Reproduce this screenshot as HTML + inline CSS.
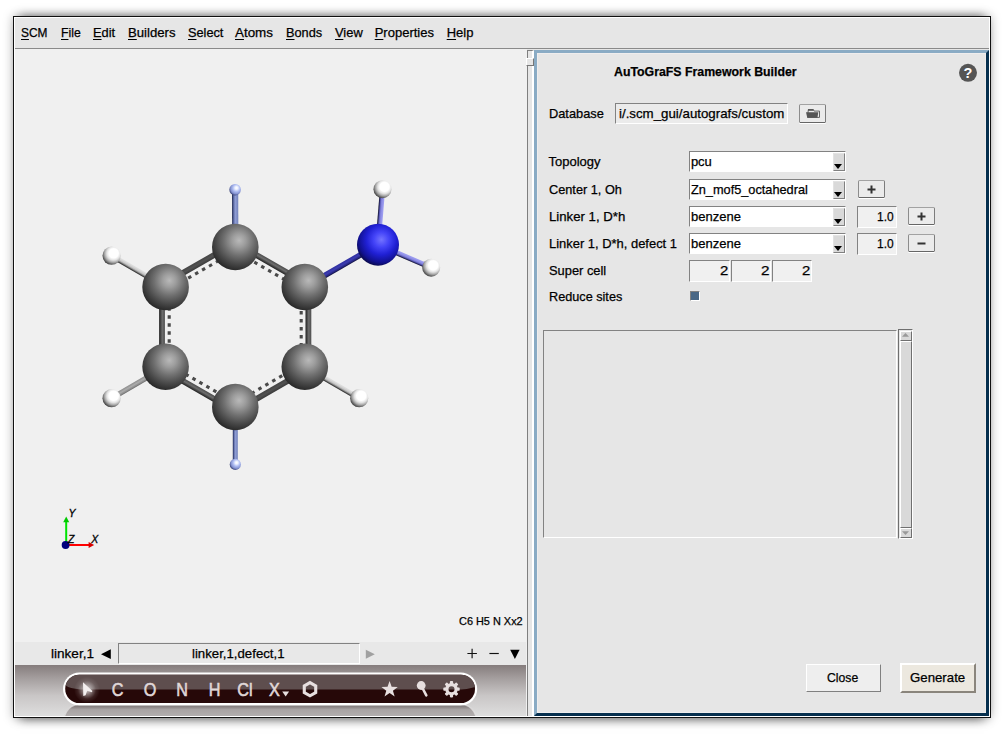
<!DOCTYPE html>
<html>
<head>
<meta charset="utf-8">
<title>AuToGraFS Framework Builder</title>
<style>
html,body{margin:0;padding:0;}
body{width:1004px;height:734px;background:#fff;overflow:hidden;position:relative;
 font-family:"Liberation Sans",sans-serif;font-size:13px;color:#000;}
.abs{position:absolute;}
#win{position:absolute;left:13px;top:16px;width:976px;height:700px;border:1px solid #111;background:#e6e6e6;
 box-shadow:0 0 10px rgba(0,0,0,.27), 0 -7px 9px -7px rgba(0,0,0,.52), 0 8px 10px -7px rgba(0,0,0,.54);}
#win:after{content:"";position:absolute;left:0;top:0;right:0;bottom:0;border:1px solid #fff;pointer-events:none;}
#inner{position:absolute;left:-14px;top:-17px;width:1004px;height:734px;}
.t{position:absolute;white-space:nowrap;line-height:16px;height:16px;transform-origin:0 50%;color:#000;-webkit-text-stroke:0.25px #000;}
.m u{text-decoration:underline;text-decoration-thickness:1px;text-underline-offset:2px;}
#menuline{left:15px;top:48px;width:974px;height:1px;background:#8a8a8a;}
#view{left:15px;top:49px;width:512px;height:667px;background:#f0f0f0;}
#tabbar{left:15px;top:642px;width:511px;height:23px;background:#e8e8e8;}
#toolbar{left:15px;top:665px;width:511px;height:51px;background:linear-gradient(#857c7c 0,#a39d9d 25%,#c9c6c6 60%,#dedede 100%);overflow:hidden;}
#sash{left:527px;top:50px;width:7px;height:666px;background:#e6e6e6;box-sizing:border-box;border-left:1px solid #7f7f7f;border-top:1px solid #7f7f7f;border-right:2px solid #fff;}
#handle{left:526px;top:58px;width:8px;height:8px;box-sizing:border-box;background:#e6e6e6;border-top:1px solid #fff;border-left:1px solid #fff;border-right:1px solid #777;border-bottom:1px solid #777;}
#panel{left:534px;top:50px;width:455px;height:666px;box-sizing:border-box;background:#e6e6e6;border:3px solid;border-color:#8aabc4 #06304f #06304f #8aabc4;box-shadow:inset 0 0 0 1px #efeded;}
.sunken{position:absolute;box-sizing:border-box;border:1px solid;border-color:#828282 #fff #fff #828282;}
.raised{position:absolute;box-sizing:border-box;border:1px solid;border-color:#fff #808080 #808080 #fff;background:#eee;}
.combo{background:#fff;height:20.6px;left:689px;width:157px;}
.cbtn{position:absolute;box-sizing:border-box;right:0;top:1px;bottom:0;width:12px;background:#d9d9d9;border:1px solid;border-color:#e2e2e2 #808080 #808080 #e2e2e2;}
.cbtn:after{content:"";position:absolute;left:.3px;bottom:.9px;border:4.2px solid transparent;border-top:5.2px solid #000;border-bottom:0;}
.entry{background:#f0f0f0;}
.btn{position:absolute;box-sizing:border-box;background:#ebebeb;border:1px solid;border-color:#a2a2a2 #7c7c7c #666 #8c8c8c;box-shadow:0 1px 0 #fff;border-radius:1.5px;}
.btn svg{position:absolute;left:0;top:0;}
</style>
</head>
<body>
<div id="win"><div id="inner">

<div id="menuline" class="abs"></div>
<div id="view" class="abs"></div>
<svg class="abs" style="left:15px;top:49px" width="511" height="593" viewBox="15 49 511 593">
<defs>
<radialGradient id="gC" cx="0.58" cy="0.36" r="0.72" fx="0.58" fy="0.36"><stop offset="0" stop-color="#b9b9b9"/><stop offset="0.2" stop-color="#9d9d9d"/><stop offset="0.45" stop-color="#707070"/><stop offset="0.7" stop-color="#484848"/><stop offset="0.9" stop-color="#2a2a2a"/><stop offset="1" stop-color="#1c1c1c"/></radialGradient>
<radialGradient id="gN" cx="0.58" cy="0.38" r="0.72" fx="0.58" fy="0.38"><stop offset="0" stop-color="#7474ff"/><stop offset="0.25" stop-color="#4444f8"/><stop offset="0.5" stop-color="#2020d4"/><stop offset="0.75" stop-color="#111190"/><stop offset="0.92" stop-color="#08083c"/><stop offset="1" stop-color="#04041c"/></radialGradient>
<radialGradient id="gH" cx="0.6" cy="0.38" r="0.68" fx="0.62" fy="0.36"><stop offset="0" stop-color="#fff"/><stop offset="0.38" stop-color="#fff"/><stop offset="0.55" stop-color="#e2e2e2"/><stop offset="0.72" stop-color="#aaa"/><stop offset="0.86" stop-color="#6a6a6a"/><stop offset="0.96" stop-color="#3a3a3a"/><stop offset="1" stop-color="#2a2a2a"/></radialGradient>
<radialGradient id="gX" cx="0.6" cy="0.38" r="0.68" fx="0.62" fy="0.34"><stop offset="0" stop-color="#fff"/><stop offset="0.18" stop-color="#eef2ff"/><stop offset="0.45" stop-color="#aebcf2"/><stop offset="0.72" stop-color="#8492d0"/><stop offset="0.9" stop-color="#48528a"/><stop offset="1" stop-color="#2c3458"/></radialGradient>
<linearGradient id="bCC" x1="0" y1="0" x2="0" y2="1"><stop offset="0" stop-color="#242424"/><stop offset="0.2" stop-color="#3c3c3c"/><stop offset="0.55" stop-color="#6e6e6e"/><stop offset="1" stop-color="#4c4c4c"/></linearGradient>
<linearGradient id="bCH" x1="0" y1="0" x2="0" y2="1"><stop offset="0" stop-color="#2a2a2a"/><stop offset="0.12" stop-color="#444"/><stop offset="0.3" stop-color="#8c8c8c"/><stop offset="0.5" stop-color="#c2c2c2"/><stop offset="0.8" stop-color="#dadada"/><stop offset="1" stop-color="#e0e0e0"/></linearGradient>
<linearGradient id="bNH" x1="0" y1="0" x2="0" y2="1"><stop offset="0" stop-color="#0c0c28"/><stop offset="0.12" stop-color="#26265c"/><stop offset="0.3" stop-color="#5a5ab4"/><stop offset="0.5" stop-color="#8484de"/><stop offset="0.8" stop-color="#9898ee"/><stop offset="1" stop-color="#a0a0f0"/></linearGradient>
<linearGradient id="bCN" x1="0" y1="0" x2="0" y2="1"><stop offset="0" stop-color="#0e0e38"/><stop offset="0.2" stop-color="#24247c"/><stop offset="0.55" stop-color="#3c3cb0"/><stop offset="1" stop-color="#3030a0"/></linearGradient>
<linearGradient id="bCX" x1="0" y1="0" x2="0" y2="1"><stop offset="0" stop-color="#1c2444"/><stop offset="0.12" stop-color="#38447a"/><stop offset="0.3" stop-color="#6a78b0"/><stop offset="0.55" stop-color="#8e9cd4"/><stop offset="1" stop-color="#7282ba"/></linearGradient>
<linearGradient id="bCCd" x1="0" y1="0" x2="0" y2="1"><stop offset="0" stop-color="#3a3a3a"/><stop offset="0.5" stop-color="#525252"/><stop offset="1" stop-color="#444"/></linearGradient>
<linearGradient id="bCHd" x1="0" y1="0" x2="0" y2="1"><stop offset="0" stop-color="#666"/><stop offset="0.2" stop-color="#8a8a8a"/><stop offset="0.55" stop-color="#acacac"/><stop offset="1" stop-color="#8c8c8c"/></linearGradient>
<linearGradient id="ovl" x1="0" y1="0" x2="1" y2="0"><stop offset="0.3" stop-color="#000" stop-opacity=".3"/><stop offset="0.55" stop-color="#000" stop-opacity="0.06"/><stop offset="0.6" stop-color="#fff" stop-opacity="0.05"/><stop offset="0.85" stop-color="#fff" stop-opacity=".28"/></linearGradient>
</defs>
<rect x="0" y="-2.90" width="80.19" height="5.80" fill="url(#bCC)" transform="translate(237.10 243.88) rotate(29.92) scale(1,-1)"/>
<line x1="233.50" y1="250.12" x2="303.00" y2="290.12" stroke="#4a4a4a" stroke-width="3.1" stroke-dasharray="3.5 4.5" stroke-dashoffset="0.0"/>
<rect x="0" y="-2.90" width="79.80" height="5.80" fill="url(#bCC)" transform="translate(308.40 287.00) rotate(90.00) scale(1,-1)"/>
<line x1="301.20" y1="287.00" x2="301.20" y2="366.80" stroke="#4a4a4a" stroke-width="3.1" stroke-dasharray="3.5 4.5" stroke-dashoffset="0.0"/>
<rect x="0" y="-2.90" width="80.29" height="5.80" fill="url(#bCCd)" transform="translate(306.60 369.92) rotate(149.95)"/>
<line x1="303.00" y1="363.68" x2="233.50" y2="403.88" stroke="#4a4a4a" stroke-width="3.1" stroke-dasharray="3.5 4.5" stroke-dashoffset="0.0"/>
<rect x="0" y="-2.90" width="80.46" height="5.80" fill="url(#bCC)" transform="translate(233.50 410.12) rotate(-150.03)"/>
<line x1="237.10" y1="403.88" x2="167.40" y2="363.68" stroke="#4a4a4a" stroke-width="3.1" stroke-dasharray="3.5 4.5" stroke-dashoffset="0.0"/>
<rect x="0" y="-2.90" width="79.80" height="5.80" fill="url(#bCC)" transform="translate(162.00 366.80) rotate(-90.00)"/>
<line x1="169.20" y1="366.80" x2="169.20" y2="287.00" stroke="#4a4a4a" stroke-width="3.1" stroke-dasharray="3.5 4.5" stroke-dashoffset="0.0"/>
<rect x="0" y="-2.90" width="80.36" height="5.80" fill="url(#bCCd)" transform="translate(163.81 283.88) rotate(-29.85) scale(1,-1)"/>
<line x1="167.39" y1="290.12" x2="237.09" y2="250.12" stroke="#4a4a4a" stroke-width="3.1" stroke-dasharray="3.5 4.5" stroke-dashoffset="0.0"/>
<rect x="0" y="-2.60" width="62.42" height="5.20" fill="url(#bCH)" transform="translate(165.60 287.00) rotate(-149.90)"/>
<rect x="0" y="-2.60" width="62.47" height="5.20" fill="url(#bCHd)" transform="translate(165.60 366.80) rotate(149.82)"/>
<rect x="0" y="-2.60" width="62.81" height="5.20" fill="url(#bCH)" transform="translate(304.80 366.80) rotate(29.99) scale(1,-1)"/>
<rect x="0" y="-3.10" width="57.30" height="6.20" fill="url(#bCX)" transform="translate(235.30 247.00) rotate(-90.20)"/>
<rect x="0" y="-2.50" width="57.40" height="5.00" fill="url(#bCX)" transform="translate(235.30 407.00) rotate(90.00) scale(1,-1)"/>
<rect x="0" y="-2.80" width="84.54" height="5.60" fill="url(#bCN)" transform="translate(304.80 287.00) rotate(-30.02) scale(1,-1)"/>
<rect x="0" y="-2.60" width="55.68" height="5.20" fill="url(#bNH)" transform="translate(378.00 244.70) rotate(-85.36)"/>
<rect x="0" y="-2.60" width="57.96" height="5.20" fill="url(#bNH)" transform="translate(378.00 244.70) rotate(23.38) scale(1,-1)"/>
<circle cx="235.3" cy="247.0" r="23.3" fill="url(#gC)"/>
<circle cx="304.8" cy="287.0" r="23.3" fill="url(#gC)"/>
<circle cx="304.8" cy="366.8" r="23.3" fill="url(#gC)"/>
<circle cx="235.3" cy="407.0" r="23.3" fill="url(#gC)"/>
<circle cx="165.6" cy="366.8" r="23.3" fill="url(#gC)"/>
<circle cx="165.6" cy="287.0" r="23.3" fill="url(#gC)"/>
<circle cx="378.0" cy="244.7" r="21.0" fill="url(#gN)"/>
<circle cx="111.6" cy="255.7" r="9.1" fill="url(#gH)"/>
<circle cx="111.6" cy="398.2" r="9.1" fill="url(#gH)"/>
<circle cx="359.2" cy="398.2" r="9.1" fill="url(#gH)"/>
<circle cx="382.5" cy="189.2" r="9.0" fill="url(#gH)"/>
<circle cx="431.2" cy="267.7" r="9.0" fill="url(#gH)"/>
<circle cx="235.1" cy="189.7" r="5.8" fill="url(#gX)"/>
<circle cx="235.3" cy="464.4" r="5.6" fill="url(#gX)"/>
<g><rect x="65.2" y="520" width="2" height="25" fill="#00e400"/><path d="M66.2 516.6l3 5.6h-6z" fill="#00c800"/><rect x="66" y="544" width="24" height="2" fill="#ff0000"/><path d="M94.2 545l-5.6 3v-6z" fill="#d80000"/><circle cx="65.6" cy="545" r="3.9" fill="#00007c"/><g font-family="Liberation Sans, sans-serif" font-style="italic" font-size="10.5" fill="#000" stroke="#000" stroke-width=".3"><text x="68.6" y="517">Y</text><text x="68" y="543">Z</text><text x="91.2" y="543.2">X</text></g></g>
</svg>
<div id="tabbar" class="abs"></div>
<div id="toolbar" class="abs"></div>
<div id="sash" class="abs"></div>
<div id="handle" class="abs"></div>
<div id="panel" class="abs"></div>

<!-- right panel widgets -->
<svg class="abs" style="left:958px;top:63px" width="20" height="20" viewBox="0 0 20 20"><circle cx="10" cy="9.8" r="9" fill="#555"/><text x="10" y="14.9" text-anchor="middle" font-family="Liberation Sans, sans-serif" font-weight="bold" font-size="14.5" fill="#fff">?</text></svg>

<div class="sunken" style="left:615px;top:103px;width:173.3px;height:21px;background:#ebebeb"></div>
<div class="btn" style="left:799px;top:104px;width:27px;height:19px"><svg width="25" height="17" viewBox="0 0 25 17"><path d="M8.3 4.6h5l.8 1.5h5.4v6.3H7.6z" fill="none" stroke="#555" stroke-width=".9"/><path d="M6 7.3h12.3l-.9 5.5H7.3z" fill="#555"/><path d="M8 4.1h5.5v1.7H8z" fill="#555"/></svg></div>

<div class="sunken combo" style="top:151px"><div class="cbtn"></div></div>
<div class="sunken combo" style="top:179px"><div class="cbtn"></div></div>
<div class="sunken combo" style="top:206.3px"><div class="cbtn"></div></div>
<div class="sunken combo" style="top:233.3px"><div class="cbtn"></div></div>

<div class="btn" style="left:857.5px;top:179.5px;width:27px;height:18.5px"><svg width="25" height="17" viewBox="0 0 25 17"><path d="M8.5 8.5h8M12.5 4.5v8" stroke="#333" stroke-width="2"/></svg></div>
<div class="sunken entry" style="left:857px;top:206px;width:40px;height:21.5px"></div>
<div class="sunken entry" style="left:857px;top:233px;width:40px;height:21.5px"></div>
<div class="btn" style="left:908px;top:206.5px;width:27px;height:18.5px"><svg width="25" height="17" viewBox="0 0 25 17"><path d="M8.5 8.5h8M12.5 4.5v8" stroke="#333" stroke-width="2"/></svg></div>
<div class="btn" style="left:908px;top:233.5px;width:27px;height:18.5px"><svg width="25" height="17" viewBox="0 0 25 17"><path d="M8.5 8.5h8" stroke="#333" stroke-width="2"/></svg></div>

<div class="sunken entry" style="left:689.4px;top:260px;width:40.5px;height:21.5px"></div>
<div class="sunken entry" style="left:731px;top:260px;width:40px;height:21.5px"></div>
<div class="sunken entry" style="left:772px;top:260px;width:40px;height:21.5px"></div>

<div class="sunken" style="left:690px;top:291px;width:10.3px;height:10px;background:#4a6886;border-color:#808080 #fff #fff #808080;"></div>

<div class="sunken" style="left:543px;top:330px;width:354px;height:208px;"></div>
<!-- scrollbar -->
<div class="sunken" style="left:898px;top:329px;width:15px;height:210px;border-color:#6f6f6f #fff #fff #6f6f6f;background:#e6e6e6"></div>
<div class="abs" style="left:900px;top:331px;width:12px;height:10px;box-sizing:border-box;background:#d9d9d9;border:1px solid;border-color:#fff #6f6f6f #6f6f6f #fff;"></div>
<div class="abs" style="left:900px;top:341px;width:12px;height:187px;box-sizing:border-box;background:#d9d9d9;border:1px solid;border-color:#fff #6f6f6f #6f6f6f #fff;"></div>
<div class="abs" style="left:900px;top:528px;width:12px;height:10px;box-sizing:border-box;background:#d9d9d9;border:1px solid;border-color:#fff #6f6f6f #6f6f6f #fff;"></div>
<svg class="abs" style="left:900px;top:331px" width="12" height="207" viewBox="0 0 12 207"><path d="M2 5.8L5.5 2L9 5.8z" fill="#999"/><path d="M2 200.2L5.5 204L9 200.2z" fill="#999"/></svg>

<div class="raised" style="left:806px;top:664px;width:74.5px;height:28px;"></div>
<div class="raised" style="left:900px;top:663px;width:76px;height:30px;border-width:2px;background:#ece8df;border-color:#fff #8a857c #8a857c #fff;"></div>

<!-- tab bar widgets -->
<div class="sunken" style="left:118px;top:643px;width:241.6px;height:21px;background:#e8e8e8"></div>
<svg class="abs" style="left:95px;top:644px" width="430" height="20" viewBox="0 0 430 20">
 <path d="M6 10.2L15.8 5.3V15.1z" fill="#000"/>
 <path d="M279.8 10.3L270.8 5.8V14.8z" fill="#a0a0a0"/>
 <path d="M372.4 9.5h9.5M377.1 4.8v9.5" stroke="#111" stroke-width="1.15"/>
 <path d="M394.4 9.5h9.4" stroke="#111" stroke-width="1.15"/>
 <path d="M415.2 5.8h9.4l-4.7 9.2z" fill="#000"/>
</svg>

<!-- bottom toolbar pill -->
<svg class="abs" style="left:15px;top:665px" width="511" height="51" viewBox="15 665 511 51">
<defs><clipPath id="pc"><rect x="65.2" y="674.7" width="409.8" height="28.4" rx="14.2"/></clipPath><radialGradient id="glow"><stop offset="0" stop-color="#fff" stop-opacity=".8"/><stop offset=".4" stop-color="#fff" stop-opacity=".38"/><stop offset=".7" stop-color="#fff" stop-opacity=".1"/><stop offset="1" stop-color="#fff" stop-opacity="0"/></radialGradient><linearGradient id="refl" x1="0" y1="0" x2="0" y2="1"><stop offset="0" stop-color="#7f7878"/><stop offset="0.07" stop-color="#857e7e"/><stop offset="0.17" stop-color="#a8a3a3"/><stop offset="0.4" stop-color="#b4b0b0"/></linearGradient></defs>
<rect x="63.6" y="704" width="413" height="33" rx="16.5" fill="url(#refl)"/>
<rect x="64" y="704" width="412.4" height="33" rx="16.5" fill="none" stroke="#e6e4e4" stroke-width="1.3" opacity=".75"/>
<rect x="63" y="672.5" width="414.2" height="33" rx="16.5" fill="#fff"/>
<rect x="65.2" y="674.7" width="409.8" height="28.4" rx="14.2" fill="#260808"/>
<path clip-path="url(#pc)" d="M60 670H480V683C476 688 468 689.6 455 689.6H88C76 689.6 68 688 64 684z" fill="#5e4e4e"/>
<circle clip-path="url(#pc)" cx="87" cy="689.8" r="13" fill="url(#glow)"/>
<path d="M83 682.3L92.4 691L91.8 692.2L87.2 690.7L85.6 695.2L83.3 696.1z" fill="#f4efef"/>
<g font-family="Liberation Sans, sans-serif" font-size="18" fill="#e0d8d8" stroke="#e0d8d8" stroke-width=".55" text-anchor="middle">
<text transform="translate(117.5 695.7) scale(.9 1)">C</text>
<text transform="translate(150.0 695.7) scale(.9 1)">O</text>
<text transform="translate(182.2 695.7) scale(.9 1)">N</text>
<text transform="translate(214.5 695.7) scale(.9 1)">H</text>
<text transform="translate(245.0 695.7) scale(.9 1)">Cl</text>
<text transform="translate(274.3 695.7) scale(.9 1)">X</text>
</g>
<path d="M282.2 691.4h6.9l-3.45 5.2z" fill="#e7dfdf"/>
<polygon points="310.00,682.60 315.72,685.90 315.72,692.50 310.00,695.80 304.28,692.50 304.28,685.90" fill="none" stroke="#e7dfdf" stroke-width="3.1" stroke-linejoin="miter"/>
<polygon points="389.60,681.00 391.66,686.77 397.78,686.94 392.93,690.68 394.65,696.56 389.60,693.10 384.55,696.56 386.27,690.68 381.42,686.94 387.54,686.77" fill="#e7dfdf"/>
<circle cx="421.2" cy="685.5" r="4.4" fill="#e7dfdf"/><path d="M422.2 687.5L426.3 695.4" stroke="#e7dfdf" stroke-width="2.6" stroke-linecap="round"/>
<circle cx="451.5" cy="689.2" r="4.6" fill="none" stroke="#e7dfdf" stroke-width="3.2"/>
<rect x="449.90" y="681.00" width="3.2" height="3.2" rx=".8" fill="#e7dfdf" transform="rotate(0 451.5 689.2)"/>
<rect x="449.90" y="681.00" width="3.2" height="3.2" rx=".8" fill="#e7dfdf" transform="rotate(45 451.5 689.2)"/>
<rect x="449.90" y="681.00" width="3.2" height="3.2" rx=".8" fill="#e7dfdf" transform="rotate(90 451.5 689.2)"/>
<rect x="449.90" y="681.00" width="3.2" height="3.2" rx=".8" fill="#e7dfdf" transform="rotate(135 451.5 689.2)"/>
<rect x="449.90" y="681.00" width="3.2" height="3.2" rx=".8" fill="#e7dfdf" transform="rotate(180 451.5 689.2)"/>
<rect x="449.90" y="681.00" width="3.2" height="3.2" rx=".8" fill="#e7dfdf" transform="rotate(225 451.5 689.2)"/>
<rect x="449.90" y="681.00" width="3.2" height="3.2" rx=".8" fill="#e7dfdf" transform="rotate(270 451.5 689.2)"/>
<rect x="449.90" y="681.00" width="3.2" height="3.2" rx=".8" fill="#e7dfdf" transform="rotate(315 451.5 689.2)"/>
</svg>

<div class="t m" style="left:21.4px;top:24.8px;font-size:13px;transform:scaleX(0.914);"><u>S</u>CM</div>
<div class="t m" style="left:60.5px;top:24.8px;font-size:13px;transform:scaleX(0.939);"><u>F</u>ile</div>
<div class="t m" style="left:92.9px;top:24.8px;font-size:13px;transform:scaleX(0.986);"><u>E</u>dit</div>
<div class="t m" style="left:127.7px;top:24.8px;font-size:13px;transform:scaleX(1.013);"><u>B</u>uilders</div>
<div class="t m" style="left:187.5px;top:24.8px;font-size:13px;transform:scaleX(0.980);"><u>S</u>elect</div>
<div class="t m" style="left:235.4px;top:24.8px;font-size:13px;transform:scaleX(1.031);"><u>A</u>toms</div>
<div class="t m" style="left:285.9px;top:24.8px;font-size:13px;transform:scaleX(0.982);"><u>B</u>onds</div>
<div class="t m" style="left:334.5px;top:24.8px;font-size:13px;transform:scaleX(0.991);"><u>V</u>iew</div>
<div class="t m" style="left:374.7px;top:24.8px;font-size:13px;"><u>P</u>roperties</div>
<div class="t m" style="left:446.7px;top:24.8px;font-size:13px;"><u>H</u>elp</div>
<div class="t " style="left:613.8px;top:63.8px;font-size:13px;font-weight:bold;transform:scaleX(0.948);">AuToGraFS Framework Builder</div>
<div class="t " style="left:548.9px;top:105.8px;font-size:13px;transform:scaleX(0.985);">Database</div>
<div class="t " style="left:618.5px;top:105.8px;font-size:13px;transform:scaleX(1.022);">i/.scm_gui/autografs/custom</div>
<div class="t " style="left:548.5px;top:153.8px;font-size:13px;">Topology</div>
<div class="t " style="left:548.5px;top:181.8px;font-size:13px;transform:scaleX(0.979);">Center 1, Oh</div>
<div class="t " style="left:548.5px;top:208.8px;font-size:13px;transform:scaleX(1.015);">Linker 1, D*h</div>
<div class="t " style="left:548.5px;top:235.8px;font-size:13px;transform:scaleX(0.995);">Linker 1, D*h, defect 1</div>
<div class="t " style="left:548.5px;top:262.8px;font-size:13px;transform:scaleX(0.989);">Super cell</div>
<div class="t " style="left:548.5px;top:288.8px;font-size:13px;transform:scaleX(0.975);">Reduce sites</div>
<div class="t " style="left:690.9px;top:153.8px;font-size:13px;">pcu</div>
<div class="t " style="left:690.5px;top:181.8px;font-size:13px;transform:scaleX(0.980);">Zn_mof5_octahedral</div>
<div class="t " style="left:691.0px;top:208.8px;font-size:13px;">benzene</div>
<div class="t " style="left:691.0px;top:235.8px;font-size:13px;">benzene</div>
<div class="t " style="left:877.3px;top:208.8px;font-size:13px;transform:scaleX(0.918);">1.0</div>
<div class="t " style="left:877.3px;top:235.8px;font-size:13px;transform:scaleX(0.918);">1.0</div>
<div class="t " style="left:719.5px;top:262.8px;font-size:13px;transform:scaleX(1.147);">2</div>
<div class="t " style="left:760.5px;top:262.8px;font-size:13px;transform:scaleX(1.175);">2</div>
<div class="t " style="left:801.8px;top:262.8px;font-size:13px;transform:scaleX(1.147);">2</div>
<div class="t " style="left:827.0px;top:669.8px;font-size:13px;transform:scaleX(0.938);">Close</div>
<div class="t " style="left:910.0px;top:669.8px;font-size:13px;transform:scaleX(1.018);">Generate</div>
<div class="t " style="left:458.9px;top:613.3px;font-size:11px;transform:scaleX(0.992);">C6 H5 N Xx2</div>
<div class="t " style="left:50.8px;top:645.8px;font-size:13px;transform:scaleX(1.044);">linker,1</div>
<div class="t " style="left:191.7px;top:645.8px;font-size:13px;transform:scaleX(1.016);">linker,1,defect,1</div>

</div></div>
</body>
</html>
